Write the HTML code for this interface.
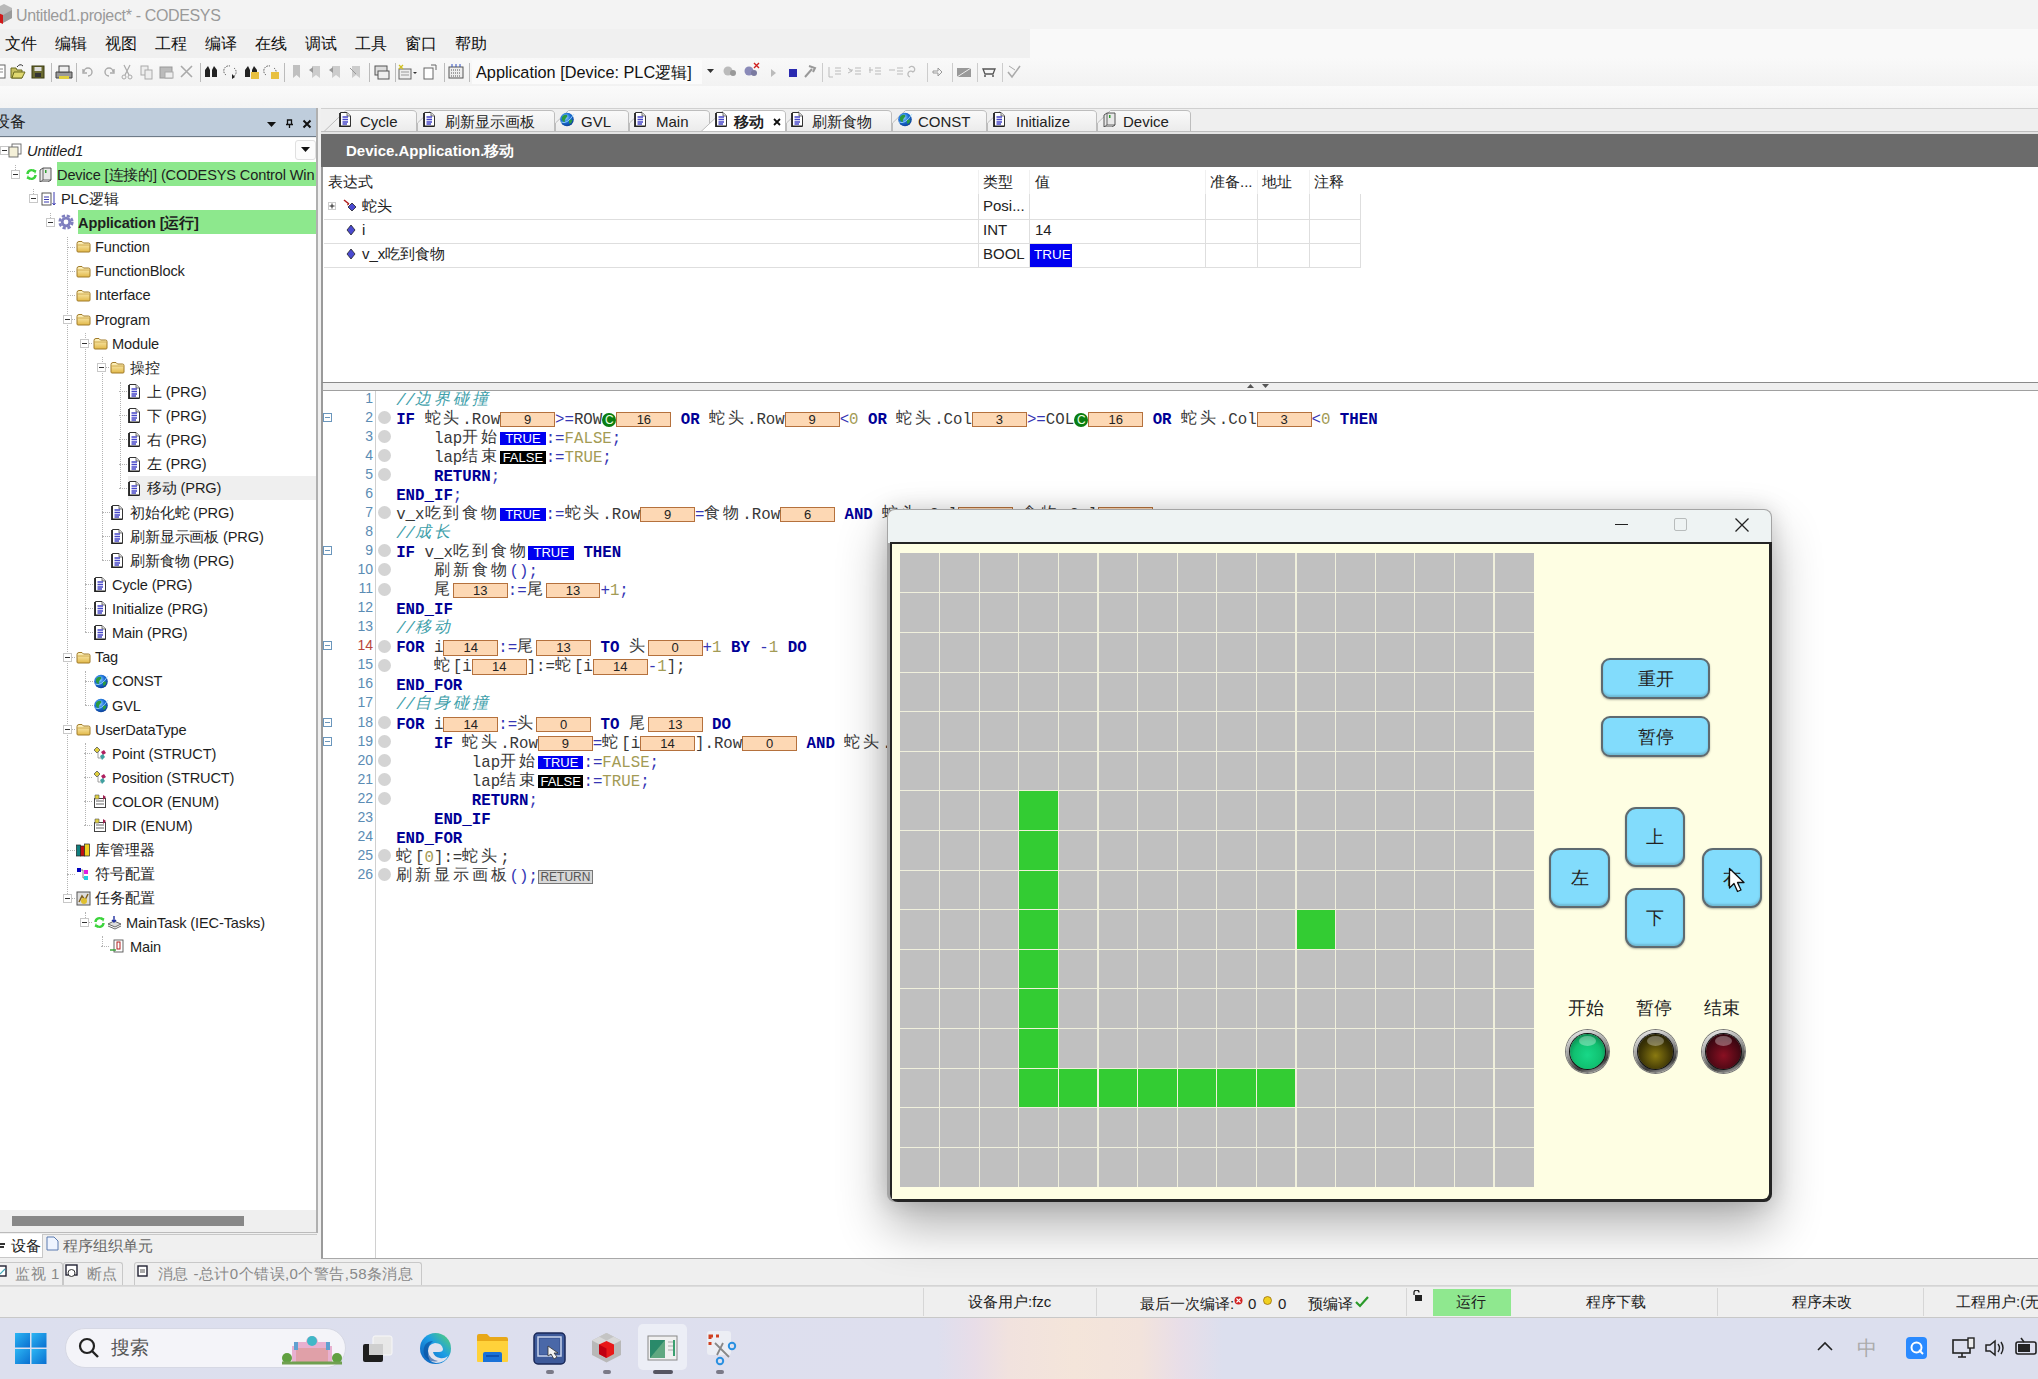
<!DOCTYPE html>
<html><head><meta charset="utf-8">
<style>
*{box-sizing:border-box;margin:0;padding:0}
html,body{width:2038px;height:1379px;overflow:hidden;background:#f0f0f0;font-family:"Liberation Sans",sans-serif;color:#1e1e1e}
.a{position:absolute}
.t{position:absolute;white-space:nowrap}
.btn{position:absolute;background:#82dcfc;border:2px solid #5e6a70;border-radius:11px;box-shadow:inset 0 -2px 2px rgba(0,0,0,0.15),0 1px 2px rgba(0,0,0,0.3);font-size:18px;color:#222;display:flex;align-items:center;justify-content:center}
.lring{width:43px;height:43px;border-radius:50%;background:linear-gradient(160deg,#f4f4f4 0%,#9a9a9a 45%,#3a3a3a 75%,#d8d8d8 100%);box-shadow:0 0 0 1px #777}.lamp{position:absolute;left:4px;top:4px;width:35px;height:35px;border-radius:50%;box-shadow:0 0 0 1px #111}.hl{position:absolute;left:9px;top:2px;width:17px;height:10px;border-radius:50%;background:rgba(255,255,255,0.32)}
.mn{position:absolute;top:34px;font-size:16px;line-height:20px;color:#111}
.tab{position:absolute;top:110px;height:23px;background:linear-gradient(#fafafa,#ececec);border:1px solid #c4c4c4;border-bottom:none;border-radius:4px 4px 0 0}
.tabt{position:absolute;top:112px;font-size:15px;line-height:20px;color:#222;white-space:nowrap}
.th{position:absolute;font-size:15px;line-height:20px;color:#222;white-space:nowrap}
.sb{position:absolute;top:1292px;font-size:15px;line-height:20px;color:#222;white-space:nowrap}

.cl{position:absolute;left:396.15px;height:19px;line-height:19px;white-space:nowrap;font-family:"Liberation Mono",monospace;font-size:15.75px;color:#333}
.cl span{vertical-align:top}
.k,.i,.o,.n,.cm{position:relative;top:1px}
.cj{font-size:16px;letter-spacing:2.9px}
.cl span.cj{top:0px}
.k{font-weight:bold;color:#000096}
.i{color:#383838}
.o{color:#3636b4}
.n{color:#a39b55}
.cm{color:#3ea0aa;font-style:italic}
.bx{display:inline-block;width:54.9px;height:15.2px;margin-top:2px;background:#fdd8b4;border:1px solid #b5713d;font-family:"Liberation Sans",sans-serif;font-size:13px;line-height:14px;text-align:center;color:#222}
.tb,.fb{display:inline-block;width:45.5px;height:13.3px;margin-top:3px;font-family:"Liberation Sans",sans-serif;font-size:13px;line-height:13.5px;text-align:center;color:#fff;background:#0000f0}
.fb{background:#000}
.ci{display:inline-block;width:14.15px;height:14.5px;margin-top:2.5px;border-radius:50%;background:#0a7d10;color:#e8ffe0;font-family:"Liberation Sans",sans-serif;font-size:12px;line-height:14.5px;text-align:center}
.rb{display:inline-block;width:55px;height:14px;margin-top:3px;background:#d8d8d8;border:1px solid #777;font-family:"Liberation Sans",sans-serif;font-size:12px;line-height:12px;text-align:center;color:#555}
.ln{position:absolute;left:340px;width:33px;text-align:right;height:19px;line-height:19px;font-size:14px;color:#5b8cb4}
.bp{position:absolute;left:378px;width:13px;height:13px;border-radius:50%;background:#d4d4d4}
.fd{position:absolute;left:323px;width:9px;height:9px;border:1px solid #6a96bc}
.fd::after{content:"";position:absolute;left:1px;top:3px;width:5px;height:1px;background:#6a96bc}

.tr{font-size:14.6px;letter-spacing:-0.15px;line-height:20px;color:#1e1e1e}
.exp{width:9px;height:9px;background:#fff;border:1px solid #c8c8c8}
.exp::after{content:"";position:absolute;left:1px;top:3px;width:5px;height:1px;background:#333}
.ifo{width:14px;height:11px;background:linear-gradient(#fff4c0,#e8c858);border:1px solid #a48030;border-radius:2px 5px 1px 1px}
.idoc{width:12px;height:15px;background:#fff;border:1px solid #333;border-radius:0 4px 0 0}
.idoc i{position:absolute;left:2px;top:3px;width:6px;height:8px;border-top:2px solid #4040c0;border-bottom:2px solid #4040c0;box-shadow:inset 0 -3px 0 -1px #4040c0}
.iglb{width:14px;height:14px;border-radius:50%;background:radial-gradient(circle at 40% 35%,#8ae0ff,#1a80d0 55%,#1a5020 100%)}

</style></head><body>
<svg width="0" height="0" style="position:absolute"><defs>
<symbol id="doc" viewBox="0 0 12 15"><path d="M1.5 0.5H8L11.5 4V14.5H1.5Z" fill="#fff" stroke="#333"/><path d="M8 0.5V4H11.5" fill="#ddd" stroke="#555" stroke-width="0.8"/><path d="M0.8 1V14.3H11" stroke="#222" stroke-width="1.4" fill="none"/><path d="M3.5 5H9M3.5 7.5H9M3.5 10H9M3.5 12H8" stroke="#4646c8" stroke-width="1.3"/></symbol>
<symbol id="glb" viewBox="0 0 16 16"><defs><radialGradient id="gg" cx="0.4" cy="0.35" r="0.7"><stop offset="0" stop-color="#9ad8ff"/><stop offset="0.5" stop-color="#1a70d8"/><stop offset="1" stop-color="#0a3a90"/></radialGradient></defs><circle cx="8" cy="8.5" r="6.8" fill="url(#gg)"/><path d="M3 6Q5 3 8 4Q9 6 7 7Q5 9 6 11Q4 11 3 9Z M10 9Q12 8 13.5 9Q13 12 10.5 13Q9.5 11 10 9Z" fill="#2a9a40"/><path d="M2 11Q8 14 15 3" stroke="#a8e0ff" stroke-width="1" fill="none" opacity="0.8"/></symbol>
<symbol id="fld" viewBox="0 0 15 13"><defs><linearGradient id="fg" x1="0" y1="0" x2="0" y2="1"><stop offset="0" stop-color="#fff6c8"/><stop offset="1" stop-color="#e2b848"/></linearGradient></defs><path d="M1 3.5Q1 1.5 3 1.5H6L7.5 3H12.5Q14 3 14 4.5V11Q14 12 13 12H2Q1 12 1 11Z" fill="url(#fg)" stroke="#a07a28"/><path d="M1.5 5H13.5" stroke="#c8a040" stroke-width="0.8"/></symbol>
</defs></svg>

<!-- title bar -->
<div class="a" style="left:0;top:0;width:2038px;height:29px;background:#f3f3f3"></div>
<svg class="a" style="left:0;top:3px" width="14" height="22"><path d="M-6 6L4 1L12 5V15L2 20L-6 16Z" fill="#b8b8b8"/><path d="M-6 8L3 12V21L-6 17Z" fill="#d01818"/><path d="M3 12L12 7V15L3 20Z" fill="#9a9a9a"/></svg>
<div class="t" style="left:16px;top:5px;font-size:16px;letter-spacing:-0.35px;line-height:22px;color:#9a9a9a">Untitled1.project* - CODESYS</div>
<!-- menu bar -->
<div class="a" style="left:0;top:29px;width:2038px;height:29px;background:#f0f0f0"></div><div class="a" style="left:1030px;top:29px;width:1008px;height:29px;background:#f9f9f9"></div>
<div class="mn" style="left:5px">文件</div><div class="mn" style="left:55px">编辑</div><div class="mn" style="left:105px">视图</div><div class="mn" style="left:155px">工程</div><div class="mn" style="left:205px">编译</div><div class="mn" style="left:255px">在线</div><div class="mn" style="left:305px">调试</div><div class="mn" style="left:355px">工具</div><div class="mn" style="left:405px">窗口</div><div class="mn" style="left:455px">帮助</div>
<!-- toolbar -->
<div class="a" style="left:0;top:58px;width:2038px;height:28px;background:linear-gradient(#f9f9f9,#f2f2f2)"></div>
<div class="a" style="left:0;top:86px;width:2038px;height:22px;background:linear-gradient(#fafafa,#f4f4f4)"></div>
<svg class="a" style="left:0;top:60px" width="1030" height="24">
<g stroke-width="1">
<rect x="-4" y="5" width="9" height="13" fill="#fff" stroke="#666"/><path d="M-2 9H3M-2 12H3" stroke="#888"/>
<path d="M11 8H16L17 10H22V18H11Z" fill="#c8c060" stroke="#6a6a20"/><path d="M12 18L14 12H25L22 18Z" fill="#e0d870" stroke="#6a6a20"/><path d="M17 7Q20 3 23 6" stroke="#333" fill="none"/>
<rect x="32" y="6" width="12" height="12" fill="#6a6a30" stroke="#3a3a10"/><rect x="34.5" y="7" width="7" height="4" fill="#ddd"/><rect x="35" y="13" width="6" height="4" fill="#333"/>
<path d="M51.5 3V22" stroke="#bbb"/>
<path d="M56 12H72V18H56Z" fill="#999" stroke="#444"/><rect x="59" y="6" width="10" height="6" fill="#eee" stroke="#444"/><rect x="59" y="16" width="10" height="3" fill="#e0d040"/>
<path d="M76.5 3V22" stroke="#bbb"/>
<path d="M84 12A4 4 0 1 1 88 16M83 9V13H87" stroke="#aaa" fill="none" stroke-width="1.4"/>
<path d="M113 12A4 4 0 1 0 109 16M114 9V13H110" stroke="#aaa" fill="none" stroke-width="1.4"/>
<path d="M124 5L129 15M130 5L125 15" stroke="#aaa" stroke-width="1.2"/><circle cx="124" cy="17" r="2" fill="none" stroke="#aaa"/><circle cx="130" cy="17" r="2" fill="none" stroke="#aaa"/>
<rect x="141" y="6" width="7" height="9" fill="#eee" stroke="#aaa"/><rect x="145" y="10" width="7" height="9" fill="#eee" stroke="#aaa"/>
<rect x="160" y="7" width="12" height="11" fill="#bbb" stroke="#999"/><rect x="165" y="12" width="8" height="6" fill="#eee" stroke="#aaa"/>
<path d="M181 6L192 17M192 6L181 17" stroke="#aaa" stroke-width="1.6"/>
<path d="M200.5 3V22" stroke="#bbb"/>
<path d="M205 17V10L208 6L210 10V17ZM212 17V10L214 6L217 10V17Z" fill="#222"/>
<path d="M226 15A5 5 0 0 1 230 6M234 8A5 5 0 0 1 232 17" stroke="#555" fill="none" stroke-dasharray="1.5 1"/><path d="M232 14L235 17L232 19Z" fill="#222"/>
<path d="M245 17V10L248 6L250 10V17ZM252 17V10L254 6L257 10V17Z" fill="#222"/><rect x="251" y="12" width="8" height="7" fill="#e8c040"/>
<path d="M266 15A5 5 0 0 1 270 6M274 8A5 5 0 0 1 272 17" stroke="#555" fill="none" stroke-dasharray="1.5 1"/><rect x="271" y="12" width="8" height="7" fill="#e8c040"/>
<path d="M284.5 3V22" stroke="#bbb"/>
<path d="M293 5H300V18L296.5 15L293 18Z" fill="#c0c0c0"/>
<path d="M312 6H320V18L316 15L312 18Z" fill="#ccc"/><path d="M309 10L313 7V13Z" fill="#999"/>
<path d="M332 6H340V18L336 15L332 18Z" fill="#ccc"/><path d="M329 10L333 7V13Z" fill="#999"/>
<path d="M352 6H360V18L356 15L352 18Z" fill="#ccc"/><path d="M350 8L356 14" stroke="#999"/>
<path d="M369.5 3V22" stroke="#bbb"/>
<rect x="375" y="6" width="12" height="9" fill="#ddd" stroke="#555"/><rect x="378" y="11" width="11" height="8" fill="#eee" stroke="#555"/>
<path d="M395.5 3V22" stroke="#bbb"/>
<rect x="399" y="9" width="12" height="10" fill="#eee" stroke="#666"/><path d="M401 12H409M401 15H409" stroke="#999"/><path d="M399 5L403 9M403 5L399 9" stroke="#d0c020" stroke-width="1.3"/><path d="M413 12H417L415 14Z" fill="#333"/>
<rect x="424" y="8" width="9" height="11" fill="#fff" stroke="#666"/><path d="M431 5H436V10" stroke="#666" fill="none"/>
<path d="M444.5 3V22" stroke="#bbb"/>
<rect x="449" y="7" width="14" height="11" fill="#eee" stroke="#555"/><path d="M451 10H461M451 13H461M451 16H461" stroke="#555" stroke-dasharray="1 1"/><path d="M452 4V7M456 4V7M460 4V7" stroke="#3050c0"/>
<path d="M469.5 3V22" stroke="#bbb"/>
<circle cx="728" cy="11" r="4.5" fill="#bbb"/><circle cx="733" cy="13" r="3" fill="#999"/>
<circle cx="749" cy="11" r="4.5" fill="#8a8ab8"/><circle cx="754" cy="13" r="3" fill="#7a7aa0"/><path d="M754 3L759 8M759 3L754 8" stroke="#d02020" stroke-width="1.4"/>
<path d="M771 9L776 13L771 17Z" fill="#bbb"/>
<rect x="789" y="9" width="8" height="8" fill="#2a2ab0"/>
<path d="M805 17L812 9M809 6L815 8L813 12" stroke="#999" stroke-width="2" fill="none"/>
<path d="M822.5 3V22" stroke="#ccc"/>
<path d="M829 7V17H833M835 8H841M835 11H841M835 14H841" stroke="#bbb" fill="none"/>
<path d="M849 10H853M855 8H861M855 11H861M855 14H861" stroke="#bbb" fill="none"/><path d="M848 8L852 11L848 13" stroke="#bbb" fill="none"/>
<path d="M869 10H873M875 8H881M875 11H881M875 14H881" stroke="#bbb" fill="none"/><path d="M870 7V13" stroke="#bbb"/>
<path d="M889 10H895M897 8H903M897 11H903M897 14H903" stroke="#bbb" fill="none"/>
<path d="M909 8A3 3 0 1 1 913 12A3 3 0 1 0 910 17" stroke="#bbb" fill="none" stroke-width="1.3"/>
<path d="M927.5 3V22" stroke="#ccc"/>
<path d="M933 11H938V8L942 12L938 16V13H933Z" fill="none" stroke="#999"/>
<path d="M952.5 3V22" stroke="#ccc"/>
<rect x="957" y="8" width="14" height="9" fill="#999"/><path d="M957 17L971 8" stroke="#eee"/>
<path d="M977.5 3V22" stroke="#ccc"/>
<path d="M983 9H995L993 14H985Z M984 16H986M992 16H994" stroke="#555" fill="none" stroke-width="1.3"/>
<path d="M1002.5 3V22" stroke="#ccc"/>
<path d="M1008 12L1012 17L1020 6" stroke="#aaa" fill="none" stroke-width="1.6"/><path d="M1009 6L1015 10" stroke="#aaa"/>
</g></svg>

<div class="a" style="left:472px;top:60px;width:230px;height:24px;background:#fbfbfb"></div>
<div class="t" style="left:476px;top:61px;font-size:16.3px;line-height:22px;color:#111">Application [Device: PLC逻辑]</div>
<svg class="a" style="left:707px;top:69px" width="7" height="5"><path d="M0 0H7L3.5 4Z" fill="#333"/></svg>

<!-- left panel -->
<div class="a" style="left:0;top:108px;width:317px;height:29px;background:#bfcddc;border-bottom:1px solid #6d7a88"></div>
<div class="t" style="left:-6px;top:112px;font-size:16px;line-height:20px">设备</div>
<svg class="a" style="left:267px;top:122px" width="9" height="5"><path d="M0 0H9L4.5 5Z" fill="#111"/></svg>
<svg class="a" style="left:285px;top:119px" width="9" height="10"><path d="M2.5 1H6.5V5.5H2.5Z M1 5.5H8 M4.5 5.5V9" stroke="#111" stroke-width="1.3" fill="none"/></svg>
<svg class="a" style="left:302px;top:119px" width="10" height="10"><path d="M1.5 1.5L8.5 8.5M8.5 1.5L1.5 8.5" stroke="#111" stroke-width="2"/></svg>
<div class="a" style="left:0;top:138px;width:317px;height:1072px;background:#fff"></div>
<div class="a" style="left:295px;top:140px;width:21px;height:20px;background:#fcfcfc;border:1px solid #e0e0e0;border-radius:3px"></div>
<svg class="a" style="left:301px;top:147px" width="9" height="5"><path d="M0 0H9L4.5 5Z" fill="#111"/></svg>
<div class="a" style="left:0;top:138px;width:316px;height:1072px;overflow:hidden"><div class="a" style="left:0;top:-138px;width:316px;height:1210px"><div class="a" style="left:67px;top:236.8px;width:1px;height:660.9px;border-left:1px dotted #b4b4b4"></div>
<div class="a" style="left:85px;top:333.3px;width:1px;height:299.1px;border-left:1px dotted #b4b4b4"></div>
<div class="a" style="left:102px;top:357.4px;width:1px;height:202.6px;border-left:1px dotted #b4b4b4"></div>
<div class="a" style="left:120px;top:381.6px;width:1px;height:106.1px;border-left:1px dotted #b4b4b4"></div>
<div class="a" style="left:85px;top:671.0px;width:1px;height:33.8px;border-left:1px dotted #b4b4b4"></div>
<div class="a" style="left:85px;top:743.4px;width:1px;height:82.0px;border-left:1px dotted #b4b4b4"></div>
<div class="a" style="left:85px;top:912.2px;width:1px;height:9.6px;border-left:1px dotted #b4b4b4"></div>
<div class="a" style="left:102px;top:936.3px;width:1px;height:9.6px;border-left:1px dotted #b4b4b4"></div>
<div class="a" style="left:15px;top:164.5px;width:1px;height:9.6px;border-left:1px dotted #b4b4b4"></div>
<div class="a" style="left:33px;top:188.6px;width:1px;height:9.6px;border-left:1px dotted #b4b4b4"></div>
<div class="a" style="left:50px;top:212.7px;width:1px;height:9.6px;border-left:1px dotted #b4b4b4"></div>
<div class="a exp" style="left:0px;top:146.0px"></div>
<svg class="a" style="left:8px;top:143.0px" width="15" height="15"><rect x="4" y="1" width="9" height="10" fill="#fff" stroke="#666" stroke-width="0.9"/><rect x="1" y="4" width="9" height="10" fill="#f4f0d8" stroke="#666" stroke-width="0.9"/></svg>
<div class="t tr" style="left:27px;top:140.7px;font-style:italic;">Untitled1</div>
<div class="a" style="left:57px;top:162.1px;width:260px;height:24px;background:#8de88d"></div>
<div class="a exp" style="left:11px;top:170.1px"></div>
<svg class="a" style="left:25px;top:168.12px" width="13" height="13"><path d="M2.5 6A4 4 0 0 1 9.5 3.5" fill="none" stroke="#3cd43c" stroke-width="2.4"/><path d="M10.5 7A4 4 0 0 1 3.5 9.5" fill="none" stroke="#3cd43c" stroke-width="2.4"/><path d="M8 1L11.5 2.5L10 6Z M5 12L1.5 10.5L3 7Z" fill="#3cd43c"/></svg>
<svg class="a" style="left:39px;top:167.12px" width="13" height="15"><path d="M1 3L4 1H12V13L9 15H1Z" fill="#e8e8e8" stroke="#444" stroke-width="0.9"/><path d="M4 1V13L1 15M4 13H12" stroke="#444" fill="none" stroke-width="0.8"/><rect x="6" y="3" width="1.5" height="3" fill="#30a030"/></svg>
<div class="t tr" style="left:57px;top:164.8px;">Device [连接的] (CODESYS Control Win V3 x64)</div>
<div class="a exp" style="left:29px;top:194.2px"></div>
<svg class="a" style="left:41px;top:191.24px" width="16" height="15"><rect x="1" y="2" width="9" height="12" fill="#fff" stroke="#444" stroke-width="0.9"/><path d="M3 6H8M3 8.5H8M3 11H8" stroke="#3a3ab0" stroke-width="1.2"/><path d="M13 1V14M11.5 12L13 14L14.5 12" stroke="#3a3ab0" fill="none"/></svg>
<div class="t tr" style="left:61px;top:188.9px;">PLC逻辑</div>
<div class="a" style="left:78px;top:210.4px;width:239px;height:24px;background:#8de88d"></div>
<div class="a exp" style="left:46px;top:218.4px"></div>
<svg class="a" style="left:58px;top:214.36px" width="16" height="16"><circle cx="8" cy="8" r="6.3" fill="none" stroke="#7f7fbf" stroke-width="2.6" stroke-dasharray="3.2 1.75"/><circle cx="8" cy="8" r="5.2" fill="#7f7fbf"/><circle cx="8" cy="8" r="2.4" fill="#fff"/></svg>
<div class="t tr" style="left:78px;top:213.1px;font-weight:bold;">Application [运行]</div>
<div class="a" style="left:67px;top:246.5px;width:8px;height:1px;border-top:1px dotted #b4b4b4"></div>
<svg class="a" style="left:76px;top:240.48000000000002px" width="15" height="13"><use href="#fld"/></svg>
<div class="t tr" style="left:95px;top:237.2px;">Function</div>
<div class="a" style="left:67px;top:270.6px;width:8px;height:1px;border-top:1px dotted #b4b4b4"></div>
<svg class="a" style="left:76px;top:264.6px" width="15" height="13"><use href="#fld"/></svg>
<div class="t tr" style="left:95px;top:261.3px;">FunctionBlock</div>
<div class="a" style="left:67px;top:294.7px;width:8px;height:1px;border-top:1px dotted #b4b4b4"></div>
<svg class="a" style="left:76px;top:288.72px" width="15" height="13"><use href="#fld"/></svg>
<div class="t tr" style="left:95px;top:285.4px;">Interface</div>
<div class="a" style="left:71px;top:318.8px;width:4px;height:1px;border-top:1px dotted #b4b4b4"></div>
<div class="a exp" style="left:63px;top:314.8px"></div>
<svg class="a" style="left:76px;top:312.84000000000003px" width="15" height="13"><use href="#fld"/></svg>
<div class="t tr" style="left:95px;top:309.5px;">Program</div>
<div class="a" style="left:88px;top:343.0px;width:4px;height:1px;border-top:1px dotted #b4b4b4"></div>
<div class="a exp" style="left:80px;top:339.0px"></div>
<svg class="a" style="left:93px;top:336.96000000000004px" width="15" height="13"><use href="#fld"/></svg>
<div class="t tr" style="left:112px;top:333.7px;">Module</div>
<div class="a" style="left:105px;top:367.1px;width:4px;height:1px;border-top:1px dotted #b4b4b4"></div>
<div class="a exp" style="left:97px;top:363.1px"></div>
<svg class="a" style="left:110px;top:361.08000000000004px" width="15" height="13"><use href="#fld"/></svg>
<div class="t tr" style="left:130px;top:357.8px;">操控</div>
<div class="a" style="left:119px;top:391.2px;width:8px;height:1px;border-top:1px dotted #b4b4b4"></div>
<svg class="a" style="left:128px;top:384.20000000000005px" width="12" height="15"><use href="#doc"/></svg>
<div class="t tr" style="left:147px;top:381.9px;">上 (PRG)</div>
<div class="a" style="left:119px;top:415.3px;width:8px;height:1px;border-top:1px dotted #b4b4b4"></div>
<svg class="a" style="left:128px;top:408.32px" width="12" height="15"><use href="#doc"/></svg>
<div class="t tr" style="left:147px;top:406.0px;">下 (PRG)</div>
<div class="a" style="left:119px;top:439.4px;width:8px;height:1px;border-top:1px dotted #b4b4b4"></div>
<svg class="a" style="left:128px;top:432.44px" width="12" height="15"><use href="#doc"/></svg>
<div class="t tr" style="left:147px;top:430.1px;">右 (PRG)</div>
<div class="a" style="left:119px;top:463.6px;width:8px;height:1px;border-top:1px dotted #b4b4b4"></div>
<svg class="a" style="left:128px;top:456.56px" width="12" height="15"><use href="#doc"/></svg>
<div class="t tr" style="left:147px;top:454.3px;">左 (PRG)</div>
<div class="a" style="left:128px;top:475.7px;width:189px;height:24px;background:#efefef"></div>
<div class="a" style="left:119px;top:487.7px;width:8px;height:1px;border-top:1px dotted #b4b4b4"></div>
<svg class="a" style="left:128px;top:480.68px" width="12" height="15"><use href="#doc"/></svg>
<div class="t tr" style="left:147px;top:478.4px;">移动 (PRG)</div>
<div class="a" style="left:102px;top:511.8px;width:8px;height:1px;border-top:1px dotted #b4b4b4"></div>
<svg class="a" style="left:111px;top:504.8px" width="12" height="15"><use href="#doc"/></svg>
<div class="t tr" style="left:130px;top:502.5px;">初始化蛇 (PRG)</div>
<div class="a" style="left:102px;top:535.9px;width:8px;height:1px;border-top:1px dotted #b4b4b4"></div>
<svg class="a" style="left:111px;top:528.9200000000001px" width="12" height="15"><use href="#doc"/></svg>
<div class="t tr" style="left:130px;top:526.6px;">刷新显示画板 (PRG)</div>
<div class="a" style="left:102px;top:560.0px;width:8px;height:1px;border-top:1px dotted #b4b4b4"></div>
<svg class="a" style="left:111px;top:553.04px" width="12" height="15"><use href="#doc"/></svg>
<div class="t tr" style="left:130px;top:550.7px;">刷新食物 (PRG)</div>
<div class="a" style="left:85px;top:584.2px;width:8px;height:1px;border-top:1px dotted #b4b4b4"></div>
<svg class="a" style="left:94px;top:577.1600000000001px" width="12" height="15"><use href="#doc"/></svg>
<div class="t tr" style="left:112px;top:574.9px;">Cycle (PRG)</div>
<div class="a" style="left:85px;top:608.3px;width:8px;height:1px;border-top:1px dotted #b4b4b4"></div>
<svg class="a" style="left:94px;top:601.28px" width="12" height="15"><use href="#doc"/></svg>
<div class="t tr" style="left:112px;top:599.0px;">Initialize (PRG)</div>
<div class="a" style="left:85px;top:632.4px;width:8px;height:1px;border-top:1px dotted #b4b4b4"></div>
<svg class="a" style="left:94px;top:625.4000000000001px" width="12" height="15"><use href="#doc"/></svg>
<div class="t tr" style="left:112px;top:623.1px;">Main (PRG)</div>
<div class="a" style="left:71px;top:656.5px;width:4px;height:1px;border-top:1px dotted #b4b4b4"></div>
<div class="a exp" style="left:63px;top:652.5px"></div>
<svg class="a" style="left:76px;top:650.52px" width="15" height="13"><use href="#fld"/></svg>
<div class="t tr" style="left:95px;top:647.2px;">Tag</div>
<div class="a" style="left:85px;top:680.6px;width:8px;height:1px;border-top:1px dotted #b4b4b4"></div>
<svg class="a" style="left:93px;top:672.64px" width="16" height="16"><use href="#glb"/></svg>
<div class="t tr" style="left:112px;top:671.3px;">CONST</div>
<div class="a" style="left:85px;top:704.8px;width:8px;height:1px;border-top:1px dotted #b4b4b4"></div>
<svg class="a" style="left:93px;top:696.76px" width="16" height="16"><use href="#glb"/></svg>
<div class="t tr" style="left:112px;top:695.5px;">GVL</div>
<div class="a" style="left:71px;top:728.9px;width:4px;height:1px;border-top:1px dotted #b4b4b4"></div>
<div class="a exp" style="left:63px;top:724.9px"></div>
<svg class="a" style="left:76px;top:722.88px" width="15" height="13"><use href="#fld"/></svg>
<div class="t tr" style="left:95px;top:719.6px;">UserDataType</div>
<div class="a" style="left:84px;top:753.0px;width:8px;height:1px;border-top:1px dotted #b4b4b4"></div>
<svg class="a" style="left:93px;top:746.0px" width="15" height="15"><path d="M1 4L4 1L7 4L4 7Z" fill="#e0d040" stroke="#555" stroke-width="0.8"/><path d="M8 6L11 4L13 7L10 9Z" fill="#b02060"/><path d="M7 10L10 8L12 11L9 14Z" fill="#40a0a0"/><path d="M5 6V12H8" stroke="#888" fill="none" stroke-width="0.8"/></svg>
<div class="t tr" style="left:112px;top:743.7px;">Point (STRUCT)</div>
<div class="a" style="left:84px;top:777.1px;width:8px;height:1px;border-top:1px dotted #b4b4b4"></div>
<svg class="a" style="left:93px;top:770.12px" width="15" height="15"><path d="M1 4L4 1L7 4L4 7Z" fill="#e0d040" stroke="#555" stroke-width="0.8"/><path d="M8 6L11 4L13 7L10 9Z" fill="#b02060"/><path d="M7 10L10 8L12 11L9 14Z" fill="#40a0a0"/><path d="M5 6V12H8" stroke="#888" fill="none" stroke-width="0.8"/></svg>
<div class="t tr" style="left:112px;top:767.8px;">Position (STRUCT)</div>
<div class="a" style="left:84px;top:801.2px;width:8px;height:1px;border-top:1px dotted #b4b4b4"></div>
<svg class="a" style="left:93px;top:794.24px" width="15" height="15"><rect x="1.5" y="4.5" width="11" height="9" fill="#fff" stroke="#444"/><path d="M3 7H11M3 10H11" stroke="#666"/><path d="M2 1L6 1L6 5L2 5Z" fill="#e0d040" stroke="#555" stroke-width="0.6"/><path d="M10 1L13 3L10 6Z" fill="#a02050"/></svg>
<div class="t tr" style="left:112px;top:791.9px;">COLOR (ENUM)</div>
<div class="a" style="left:84px;top:825.4px;width:8px;height:1px;border-top:1px dotted #b4b4b4"></div>
<svg class="a" style="left:93px;top:818.36px" width="15" height="15"><rect x="1.5" y="4.5" width="11" height="9" fill="#fff" stroke="#444"/><path d="M3 7H11M3 10H11" stroke="#666"/><path d="M2 1L6 1L6 5L2 5Z" fill="#e0d040" stroke="#555" stroke-width="0.6"/><path d="M10 1L13 3L10 6Z" fill="#a02050"/></svg>
<div class="t tr" style="left:112px;top:816.1px;">DIR (ENUM)</div>
<div class="a" style="left:67px;top:849.5px;width:8px;height:1px;border-top:1px dotted #b4b4b4"></div>
<svg class="a" style="left:76px;top:842.48px" width="15" height="15"><rect x="0.5" y="3" width="4" height="11" fill="#108080" stroke="#222" stroke-width="0.7"/><rect x="4.5" y="4" width="4" height="10" fill="#c01010" stroke="#222" stroke-width="0.7"/><rect x="8.5" y="2" width="5" height="12" fill="#f0d020" stroke="#222" stroke-width="0.7"/></svg>
<div class="t tr" style="left:95px;top:840.2px;">库管理器</div>
<div class="a" style="left:67px;top:873.6px;width:8px;height:1px;border-top:1px dotted #b4b4b4"></div>
<svg class="a" style="left:76px;top:866.6px" width="15" height="15"><rect x="1" y="1" width="4" height="4" fill="#0000c0"/><rect x="8" y="3" width="4" height="4" fill="#e020e0"/><rect x="8" y="9" width="4" height="4" fill="#20d0e0"/><path d="M5 3H7V11H8" stroke="#666" fill="none" stroke-width="0.8"/></svg>
<div class="t tr" style="left:95px;top:864.3px;">符号配置</div>
<div class="a" style="left:71px;top:897.7px;width:4px;height:1px;border-top:1px dotted #b4b4b4"></div>
<div class="a exp" style="left:63px;top:893.7px"></div>
<svg class="a" style="left:76px;top:890.72px" width="15" height="15"><rect x="1" y="1" width="13" height="13" fill="#ddd" stroke="#555"/><path d="M3 11L6 5L9 9L12 3" stroke="#806020" fill="none" stroke-width="1.5"/><circle cx="8" cy="10" r="3" fill="#e0c030"/></svg>
<div class="t tr" style="left:95px;top:888.4px;">任务配置</div>
<div class="a" style="left:88px;top:921.8px;width:4px;height:1px;border-top:1px dotted #b4b4b4"></div>
<div class="a exp" style="left:80px;top:917.8px"></div>
<svg class="a" style="left:93px;top:915.84px" width="13" height="13"><path d="M2.5 6A4 4 0 0 1 9.5 3.5" fill="none" stroke="#3cd43c" stroke-width="2.4"/><path d="M10.5 7A4 4 0 0 1 3.5 9.5" fill="none" stroke="#3cd43c" stroke-width="2.4"/><path d="M8 1L11.5 2.5L10 6Z M5 12L1.5 10.5L3 7Z" fill="#3cd43c"/></svg>
<svg class="a" style="left:107px;top:914.84px" width="15" height="15"><path d="M1 9L7 6L14 9L8 12Z" fill="#ddd" stroke="#444" stroke-width="0.8"/><path d="M1 11L8 14L14 11" stroke="#444" fill="none" stroke-width="0.8"/><path d="M7 1V7M5 5L7 7L9 5" stroke="#2030a0" stroke-width="1.4" fill="none"/></svg>
<div class="t tr" style="left:126px;top:912.5px;">MainTask (IEC-Tasks)</div>
<div class="a" style="left:101px;top:946.0px;width:8px;height:1px;border-top:1px dotted #b4b4b4"></div>
<svg class="a" style="left:110px;top:938.96px" width="15" height="15"><rect x="4" y="1" width="9" height="12" fill="#fff" stroke="#555" stroke-width="0.9"/><rect x="7" y="3" width="3" height="7" fill="none" stroke="#b02020" stroke-width="1"/><path d="M0 11H6" stroke="#30a030" stroke-width="1.4"/></svg>
<div class="t tr" style="left:130px;top:936.7px;">Main</div></div></div>
<div class="a" style="left:0;top:1210px;width:317px;height:23px;background:#efefef;border-bottom:1px solid #bbb"></div>
<div class="a" style="left:12px;top:1216px;width:232px;height:10px;background:#888"></div>
<div class="a" style="left:316px;top:108px;width:1.5px;height:1125px;background:#b0b0b0"></div>
<!-- left bottom tabs -->
<div class="a" style="left:0;top:1234px;width:317px;height:1px;background:#c8c8c8"></div>
<div class="a" style="left:0;top:1234px;width:43px;height:24px;background:#fff;border-right:1px solid #c8c8c8;border-bottom:1px solid #c8c8c8"></div>
<div class="t" style="left:11px;top:1236px;font-size:15px;line-height:20px;color:#222">设备</div>
<svg class="a" style="left:0;top:1238px" width="7" height="14"><path d="M0 6H5M0 9H4" stroke="#333" stroke-width="2"/></svg>
<svg class="a" style="left:46px;top:1236px" width="13" height="15"><path d="M1 1H8L12 5V14H1Z" fill="#eef4ff" stroke="#5a7ab0"/></svg>
<div class="t" style="left:63px;top:1236px;font-size:15px;line-height:20px;color:#666">程序组织单元</div>

<!-- editor -->
<div class="a" style="left:321px;top:108px;width:1717px;height:26px;background:#efefef;border-top:1px solid #d0d0d0"></div>
<svg class="a" style="left:0;top:0" width="1200" height="136"><defs><linearGradient id="tg" x1="0" y1="0" x2="0" y2="1"><stop offset="0" stop-color="#fafafa"/><stop offset="1" stop-color="#ebebeb"/></linearGradient></defs><path d="M324 131.5L346 110.5H412Q416.5 110.5 416.5 114V131.5" fill="url(#tg)" stroke="#bdbdbd"/><path d="M417.5 131.5V123L430.5 110.5H550Q554.5 110.5 554.5 114V131.5" fill="url(#tg)" stroke="#bdbdbd"/><path d="M555.5 131.5V123L568.5 110.5H624Q628.5 110.5 628.5 114V131.5" fill="url(#tg)" stroke="#bdbdbd"/><path d="M629.5 131.5V123L642.5 110.5H705Q709.5 110.5 709.5 114V131.5" fill="url(#tg)" stroke="#bdbdbd"/><path d="M786.5 131.5V123L799.5 110.5H887Q891.5 110.5 891.5 114V131.5" fill="url(#tg)" stroke="#bdbdbd"/><path d="M892.5 131.5V123L905.5 110.5H982Q986.5 110.5 986.5 114V131.5" fill="url(#tg)" stroke="#bdbdbd"/><path d="M987.5 131.5V123L1000.5 110.5H1092Q1096.5 110.5 1096.5 114V131.5" fill="url(#tg)" stroke="#bdbdbd"/><path d="M1097.5 131.5V123L1110.5 110.5H1186Q1190.5 110.5 1190.5 114V131.5" fill="url(#tg)" stroke="#bdbdbd"/><path d="M700 132.5L723.5 110.5H781Q785.5 110.5 785.5 114V132.5" fill="#fff" stroke="#bdbdbd"/></svg>
<div class="tabt" style="left:360px">Cycle</div>
<div class="tabt" style="left:445px">刷新显示画板</div>
<div class="tabt" style="left:581px">GVL</div>
<div class="tabt" style="left:656px">Main</div>
<div class="tabt" style="left:734px;font-weight:bold">移动</div>
<svg class="a" style="left:773px;top:118px" width="8" height="8"><path d="M1 1L7 7M7 1L1 7" stroke="#111" stroke-width="1.8"/></svg>
<div class="tabt" style="left:812px">刷新食物</div>
<div class="tabt" style="left:918px">CONST</div>
<div class="tabt" style="left:1016px">Initialize</div>
<div class="tabt" style="left:1123px">Device</div>
<svg class="a" style="left:339px;top:112px" width="12" height="15"><use href="#doc"/></svg>
<svg class="a" style="left:423px;top:112px" width="12" height="15"><use href="#doc"/></svg>
<svg class="a" style="left:559px;top:111px" width="16" height="16"><use href="#glb"/></svg>
<svg class="a" style="left:634px;top:112px" width="12" height="15"><use href="#doc"/></svg>
<svg class="a" style="left:715px;top:112px" width="12" height="15"><use href="#doc"/></svg>
<svg class="a" style="left:791px;top:112px" width="12" height="15"><use href="#doc"/></svg>
<svg class="a" style="left:897px;top:111px" width="16" height="16"><use href="#glb"/></svg>
<svg class="a" style="left:993px;top:112px" width="12" height="15"><use href="#doc"/></svg>
<svg class="a" style="left:1103px;top:112px" width="13" height="15"><path d="M1 3L4 1H12V13L9 15H1Z" fill="#e8e8e8" stroke="#444" stroke-width="0.9"/><path d="M4 1V13L1 15M4 13H12" stroke="#444" fill="none" stroke-width="0.8"/><rect x="6" y="3" width="1.5" height="3" fill="#30a030"/></svg>

<div class="a" style="left:321px;top:131px;width:1717px;height:3px;background:#e4e4e4;border-top:1px solid #bdbdbd"></div>
<div class="a" style="left:321px;top:134px;width:1717px;height:33px;background:#6b6b6b"></div>
<div class="t" style="left:346px;top:141px;font-size:15px;line-height:20px;font-weight:bold;color:#fff">Device.Application.移动</div>
<div class="a" style="left:321px;top:167px;width:1717px;height:216px;background:#fff;border-left:2px solid #9a9a9a;border-bottom:1px solid #8a8a8a"></div>
<div class="th" style="left:328px;top:172px">表达式</div>
<div class="th" style="left:983px;top:172px">类型</div>
<div class="th" style="left:1035px;top:172px">值</div>
<div class="th" style="left:1210px;top:172px">准备...</div>
<div class="th" style="left:1262px;top:172px">地址</div>
<div class="th" style="left:1314px;top:172px">注释</div>
<div class="a" style="left:978px;top:170px;width:1px;height:24px;background:#f0f0f0"></div>
<div class="a" style="left:1029px;top:170px;width:1px;height:24px;background:#f0f0f0"></div>
<div class="a" style="left:1205px;top:170px;width:1px;height:24px;background:#f0f0f0"></div>
<div class="a" style="left:1257px;top:170px;width:1px;height:24px;background:#f0f0f0"></div>
<div class="a" style="left:1309px;top:170px;width:1px;height:24px;background:#f0f0f0"></div>
<div class="a" style="left:978px;top:194px;width:1px;height:74px;background:#dedede"></div>
<div class="a" style="left:1029px;top:194px;width:1px;height:74px;background:#dedede"></div>
<div class="a" style="left:1205px;top:194px;width:1px;height:74px;background:#dedede"></div>
<div class="a" style="left:1257px;top:194px;width:1px;height:74px;background:#dedede"></div>
<div class="a" style="left:1309px;top:194px;width:1px;height:74px;background:#dedede"></div>
<div class="a" style="left:1360px;top:194px;width:1px;height:74px;background:#dedede"></div>
<div class="a" style="left:324px;top:219px;width:1037px;height:1px;background:#dedede"></div>
<div class="a" style="left:324px;top:243px;width:1037px;height:1px;background:#dedede"></div>
<div class="a" style="left:324px;top:267px;width:1037px;height:1px;background:#dedede"></div>
<div class="a" style="left:328px;top:202px;width:8px;height:8px;border:1px solid #ccc;background:#fff"></div>
<svg class="a" style="left:328px;top:202px" width="8" height="8"><path d="M1.5 4H6.5M4 1.5V6.5" stroke="#222" stroke-width="1"/></svg>
<svg class="a" style="left:343px;top:199px" width="14" height="14"><path d="M1 1L6 5" stroke="#b02020" stroke-width="1.6"/><path d="M4 3L6 5L4 6" stroke="#b02020" fill="none"/><path d="M9 4L13 8L9 12L5 8Z" fill="#4a4ad0" stroke="#222" stroke-width="0.8"/></svg>
<div class="th" style="left:362px;top:196px">蛇头</div>
<svg class="a" style="left:345px;top:224px" width="12" height="12"><path d="M6 1L10 6L6 11L2 6Z" fill="#4a4ad0" stroke="#222" stroke-width="0.8"/></svg>
<div class="th" style="left:362px;top:220px">i</div>
<svg class="a" style="left:345px;top:248px" width="12" height="12"><path d="M6 1L10 6L6 11L2 6Z" fill="#4a4ad0" stroke="#222" stroke-width="0.8"/></svg>
<div class="th" style="left:362px;top:244px">v_x吃到食物</div>
<div class="th" style="left:983px;top:196px">Posi...</div>
<div class="th" style="left:983px;top:220px">INT</div>
<div class="th" style="left:1035px;top:220px">14</div>
<div class="th" style="left:983px;top:244px">BOOL</div>
<div class="a" style="left:1030px;top:244px;width:42px;height:23px;background:#0000f0"></div>
<div class="th" style="left:1034px;top:245px;color:#fff;font-size:13.5px">TRUE</div>

<div class="a" style="left:321px;top:383px;width:1717px;height:8px;background:#efefef;border-left:2px solid #9a9a9a;border-bottom:1px solid #a0a0a0"></div>
<svg class="a" style="left:1245px;top:383px" width="26" height="6"><path d="M2 5L5.5 1L9 5Z M17 1H24L20.5 5Z" fill="#555"/></svg>
<div class="a" style="left:321px;top:391px;width:1717px;height:868px;background:#fff;border-left:2px solid #9a9a9a"></div>
<div class="a" style="left:375px;top:391px;width:1px;height:868px;background:#d0d0d0"></div>
<div class="ln" style="top:389.00px;">1</div>
<div class="cl" style="top:391.00px"><span class="cm">//</span><span class="cm cj">边界碰撞</span></div>
<div class="ln" style="top:408.03px;">2</div>
<div class="bp" style="top:411.23px"></div>
<div class="fd" style="top:413.03px"></div>
<div class="cl" style="top:410.03px"><span class="k">IF</span><span class="i">&nbsp;</span><span class="i cj">蛇头</span><span class="i">.Row</span><span class="bx">9</span><span class="o">&gt;=</span><span class="i">ROW</span><span class="ci">C</span><span class="bx">16</span><span class="i">&nbsp;</span><span class="k">OR</span><span class="i">&nbsp;</span><span class="i cj">蛇头</span><span class="i">.Row</span><span class="bx">9</span><span class="o">&lt;</span><span class="n">0</span><span class="i">&nbsp;</span><span class="k">OR</span><span class="i">&nbsp;</span><span class="i cj">蛇头</span><span class="i">.Col</span><span class="bx">3</span><span class="o">&gt;=</span><span class="i">COL</span><span class="ci">C</span><span class="bx">16</span><span class="i">&nbsp;</span><span class="k">OR</span><span class="i">&nbsp;</span><span class="i cj">蛇头</span><span class="i">.Col</span><span class="bx">3</span><span class="o">&lt;</span><span class="n">0</span><span class="i">&nbsp;</span><span class="k">THEN</span></div>
<div class="ln" style="top:427.06px;">3</div>
<div class="bp" style="top:430.26px"></div>
<div class="cl" style="top:429.06px"><span class="i">&nbsp;&nbsp;&nbsp;&nbsp;</span><span class="i">lap</span><span class="i cj">开始</span><span class="tb">TRUE</span><span class="o">:=</span><span class="n">FALSE</span><span class="o">;</span></div>
<div class="ln" style="top:446.09px;">4</div>
<div class="bp" style="top:449.29px"></div>
<div class="cl" style="top:448.09px"><span class="i">&nbsp;&nbsp;&nbsp;&nbsp;</span><span class="i">lap</span><span class="i cj">结束</span><span class="fb">FALSE</span><span class="o">:=</span><span class="n">TRUE</span><span class="o">;</span></div>
<div class="ln" style="top:465.12px;">5</div>
<div class="bp" style="top:468.32px"></div>
<div class="cl" style="top:467.12px"><span class="i">&nbsp;&nbsp;&nbsp;&nbsp;</span><span class="k">RETURN</span><span class="o">;</span></div>
<div class="ln" style="top:484.15px;">6</div>
<div class="cl" style="top:486.15px"><span class="k">END_IF</span><span class="o">;</span></div>
<div class="ln" style="top:503.18px;">7</div>
<div class="bp" style="top:506.38px"></div>
<div class="cl" style="top:505.18px"><span class="i">v_x</span><span class="i cj">吃到食物</span><span class="tb">TRUE</span><span class="o">:=</span><span class="i cj">蛇头</span><span class="i">.Row</span><span class="bx">9</span><span class="o">=</span><span class="i cj">食物</span><span class="i">.Row</span><span class="bx">6</span><span class="i">&nbsp;</span><span class="k">AND</span><span class="i">&nbsp;</span><span class="i cj">蛇头</span><span class="i">.Col</span><span class="bx">3</span><span class="o">=</span><span class="i cj">食物</span><span class="i">.Col</span><span class="bx">3</span></div>
<div class="ln" style="top:522.21px;">8</div>
<div class="cl" style="top:524.21px"><span class="cm">//</span><span class="cm cj">成长</span></div>
<div class="ln" style="top:541.24px;">9</div>
<div class="bp" style="top:544.44px"></div>
<div class="fd" style="top:546.24px"></div>
<div class="cl" style="top:543.24px"><span class="k">IF</span><span class="i">&nbsp;v_x</span><span class="i cj">吃到食物</span><span class="tb">TRUE</span><span class="i">&nbsp;</span><span class="k">THEN</span></div>
<div class="ln" style="top:560.27px;">10</div>
<div class="bp" style="top:563.47px"></div>
<div class="cl" style="top:562.27px"><span class="i">&nbsp;&nbsp;&nbsp;&nbsp;</span><span class="i cj">刷新食物</span><span class="o">();</span></div>
<div class="ln" style="top:579.30px;">11</div>
<div class="bp" style="top:582.50px"></div>
<div class="cl" style="top:581.30px"><span class="i">&nbsp;&nbsp;&nbsp;&nbsp;</span><span class="i cj">尾</span><span class="bx">13</span><span class="o">:=</span><span class="i cj">尾</span><span class="bx">13</span><span class="o">+</span><span class="n">1</span><span class="o">;</span></div>
<div class="ln" style="top:598.33px;">12</div>
<div class="cl" style="top:600.33px"><span class="k">END_IF</span></div>
<div class="ln" style="top:617.36px;">13</div>
<div class="cl" style="top:619.36px"><span class="cm">//</span><span class="cm cj">移动</span></div>
<div class="ln" style="top:636.39px;color:#b8463c">14</div>
<div class="bp" style="top:639.59px"></div>
<div class="fd" style="top:641.39px"></div>
<div class="cl" style="top:638.39px"><span class="k">FOR</span><span class="i">&nbsp;i</span><span class="bx">14</span><span class="o">:=</span><span class="i cj">尾</span><span class="bx">13</span><span class="i">&nbsp;</span><span class="k">TO</span><span class="i">&nbsp;</span><span class="i cj">头</span><span class="bx">0</span><span class="o">+</span><span class="n">1</span><span class="i">&nbsp;</span><span class="k">BY</span><span class="i">&nbsp;</span><span class="o">-</span><span class="n">1</span><span class="i">&nbsp;</span><span class="k">DO</span></div>
<div class="ln" style="top:655.42px;">15</div>
<div class="bp" style="top:658.62px"></div>
<div class="cl" style="top:657.42px"><span class="i">&nbsp;&nbsp;&nbsp;&nbsp;</span><span class="i cj">蛇</span><span class="i">[i</span><span class="bx">14</span><span class="i">]:=</span><span class="i cj">蛇</span><span class="i">[i</span><span class="bx">14</span><span class="o">-</span><span class="n">1</span><span class="i">];</span></div>
<div class="ln" style="top:674.45px;">16</div>
<div class="cl" style="top:676.45px"><span class="k">END_FOR</span></div>
<div class="ln" style="top:693.48px;">17</div>
<div class="cl" style="top:695.48px"><span class="cm">//</span><span class="cm cj">自身碰撞</span></div>
<div class="ln" style="top:712.51px;">18</div>
<div class="bp" style="top:715.71px"></div>
<div class="fd" style="top:717.51px"></div>
<div class="cl" style="top:714.51px"><span class="k">FOR</span><span class="i">&nbsp;i</span><span class="bx">14</span><span class="o">:=</span><span class="i cj">头</span><span class="bx">0</span><span class="i">&nbsp;</span><span class="k">TO</span><span class="i">&nbsp;</span><span class="i cj">尾</span><span class="bx">13</span><span class="i">&nbsp;</span><span class="k">DO</span></div>
<div class="ln" style="top:731.54px;">19</div>
<div class="bp" style="top:734.74px"></div>
<div class="fd" style="top:736.54px"></div>
<div class="cl" style="top:733.54px"><span class="i">&nbsp;&nbsp;&nbsp;&nbsp;</span><span class="k">IF</span><span class="i">&nbsp;</span><span class="i cj">蛇头</span><span class="i">.Row</span><span class="bx">9</span><span class="o">=</span><span class="i cj">蛇</span><span class="i">[i</span><span class="bx">14</span><span class="i">].Row</span><span class="bx">0</span><span class="i">&nbsp;</span><span class="k">AND</span><span class="i">&nbsp;</span><span class="i cj">蛇头</span><span class="i">.Col</span><span class="bx">3</span></div>
<div class="ln" style="top:750.57px;">20</div>
<div class="bp" style="top:753.77px"></div>
<div class="cl" style="top:752.57px"><span class="i">&nbsp;&nbsp;&nbsp;&nbsp;&nbsp;&nbsp;&nbsp;&nbsp;</span><span class="i">lap</span><span class="i cj">开始</span><span class="tb">TRUE</span><span class="o">:=</span><span class="n">FALSE</span><span class="o">;</span></div>
<div class="ln" style="top:769.60px;">21</div>
<div class="bp" style="top:772.80px"></div>
<div class="cl" style="top:771.60px"><span class="i">&nbsp;&nbsp;&nbsp;&nbsp;&nbsp;&nbsp;&nbsp;&nbsp;</span><span class="i">lap</span><span class="i cj">结束</span><span class="fb">FALSE</span><span class="o">:=</span><span class="n">TRUE</span><span class="o">;</span></div>
<div class="ln" style="top:788.63px;">22</div>
<div class="bp" style="top:791.83px"></div>
<div class="cl" style="top:790.63px"><span class="i">&nbsp;&nbsp;&nbsp;&nbsp;&nbsp;&nbsp;&nbsp;&nbsp;</span><span class="k">RETURN</span><span class="o">;</span></div>
<div class="ln" style="top:807.66px;">23</div>
<div class="cl" style="top:809.66px"><span class="i">&nbsp;&nbsp;&nbsp;&nbsp;</span><span class="k">END_IF</span></div>
<div class="ln" style="top:826.69px;">24</div>
<div class="cl" style="top:828.69px"><span class="k">END_FOR</span></div>
<div class="ln" style="top:845.72px;">25</div>
<div class="bp" style="top:848.92px"></div>
<div class="cl" style="top:847.72px"><span class="i cj">蛇</span><span class="i">[</span><span class="n">0</span><span class="i">]:=</span><span class="i cj">蛇头</span><span class="i">;</span></div>
<div class="ln" style="top:864.75px;">26</div>
<div class="bp" style="top:867.95px"></div>
<div class="cl" style="top:866.75px"><span class="i cj">刷新显示画板</span><span class="o">();</span><span class="rb">RETURN</span></div>

<!-- message tabs -->
<div class="a" style="left:0;top:1259px;width:2038px;height:28px;background:#efefef"></div>
<div class="a" style="left:321px;top:1258px;width:1717px;height:1px;background:#a8a8a8"></div>
<div class="a" style="left:0;top:1262px;width:63px;height:24px;border:1px solid #c8c8c8;border-bottom:none;border-left:none;border-radius:0 3px 0 0"></div>
<div class="a" style="left:63px;top:1262px;width:60px;height:24px;border:1px solid #c8c8c8;border-bottom:none;border-radius:3px 3px 0 0"></div>
<div class="a" style="left:134px;top:1262px;width:288px;height:24px;border:1px solid #c8c8c8;border-bottom:none;border-radius:3px 3px 0 0"></div>
<div class="a" style="left:0;top:1285px;width:2038px;height:1px;background:#d4d4d4"></div>
<div class="t" style="left:15px;top:1264px;font-size:15px;line-height:20px;color:#888;letter-spacing:0.6px">监视 1</div>
<div class="t" style="left:87px;top:1264px;font-size:15px;line-height:20px;color:#888">断点</div>
<div class="t" style="left:158px;top:1264px;font-size:15px;line-height:20px;color:#888;letter-spacing:0.45px">消息 -总计0个错误,0个警告,58条消息</div>
<svg class="a" style="left:0;top:1265px" width="8" height="14"><rect x="-4" y="1" width="10" height="10" fill="#fff" stroke="#223" stroke-width="1.4"/><path d="M0 9L5 4" stroke="#4ab" stroke-width="1.2"/></svg>
<svg class="a" style="left:65px;top:1264px" width="13" height="15"><rect x="1" y="1" width="11" height="10" fill="#fff" stroke="#223" stroke-width="1.4"/><circle cx="6.5" cy="9" r="3.5" fill="#fff" stroke="#333"/></svg>
<svg class="a" style="left:137px;top:1265px" width="11" height="12"><rect x="1" y="1" width="9" height="10" fill="#fff" stroke="#223" stroke-width="1.4"/><path d="M3 5H8M3 7H8" stroke="#555"/></svg>

<!-- status bar -->
<div class="a" style="left:0;top:1286px;width:2038px;height:32px;background:#efefef;border-top:1px solid #dcdcdc;border-bottom:1px solid #c8c8c8"></div>
<div class="a" style="left:923px;top:1288px;width:1px;height:28px;background:#d6d6d6"></div>
<div class="a" style="left:1096px;top:1288px;width:1px;height:28px;background:#d6d6d6"></div>
<div class="a" style="left:1406px;top:1288px;width:1px;height:28px;background:#d6d6d6"></div>
<div class="a" style="left:1717px;top:1288px;width:1px;height:28px;background:#d6d6d6"></div>
<div class="a" style="left:1923px;top:1288px;width:1px;height:28px;background:#d6d6d6"></div>
<div class="sb" style="left:968px">设备用户:fzc</div>
<div class="sb" style="left:1140px;top:1294px">最后一次编译:</div>
<svg class="a" style="left:1234px;top:1296px" width="9" height="9"><circle cx="4.5" cy="4.5" r="4" fill="#d02020"/><path d="M2.5 2.5L6.5 6.5M6.5 2.5L2.5 6.5" stroke="#fff" stroke-width="1.1"/></svg>
<div class="sb" style="left:1248px;top:1294px">0</div>
<svg class="a" style="left:1263px;top:1296px" width="9" height="9"><circle cx="4.5" cy="4.5" r="4" fill="#f0d020" stroke="#906000" stroke-width="0.7"/></svg>
<div class="sb" style="left:1278px;top:1294px">0</div>
<div class="sb" style="left:1308px;top:1294px">预编译</div>
<svg class="a" style="left:1355px;top:1296px" width="14" height="12"><path d="M1 6L5 10L13 1" stroke="#2a9a2a" stroke-width="2.2" fill="none"/></svg>
<svg class="a" style="left:1412px;top:1290px" width="11" height="12"><path d="M2 5V2.5A2.5 2.5 0 0 1 7 2.5" stroke="#222" stroke-width="1.3" fill="none"/><rect x="3" y="5" width="7" height="6" fill="#222"/></svg>
<div class="a" style="left:1433px;top:1289px;width:78px;height:27px;background:#8fe88f"></div>
<div class="sb" style="left:1456px">运行</div>
<div class="sb" style="left:1586px">程序下载</div>
<div class="sb" style="left:1792px">程序未改</div>
<div class="sb" style="left:1956px">工程用户:(无)</div>

<!-- taskbar -->
<div class="a" style="left:0;top:1318px;width:2038px;height:61px;background:linear-gradient(90deg,#dcdfee 0%,#dedfee 46%,#e8dde8 47.8%,#f1e2de 49.5%,#f4e5da 52.7%,#f2e3dc 56%,#e8dee8 57.9%,#dcdfee 60%,#dcdfee 100%)"></div>
<svg class="a" style="left:15px;top:1333px" width="32" height="31"><defs><linearGradient id="wg" x1="0" y1="0" x2="1" y2="1"><stop offset="0" stop-color="#2cb6f4"/><stop offset="1" stop-color="#0a6fd0"/></linearGradient></defs><rect x="0" y="0" width="15" height="14.5" fill="url(#wg)"/><rect x="16.5" y="0" width="15" height="14.5" fill="url(#wg)"/><rect x="0" y="16" width="15" height="15" fill="url(#wg)"/><rect x="16.5" y="16" width="15" height="15" fill="url(#wg)"/></svg>
<div class="a" style="left:65px;top:1328px;width:281px;height:40px;border-radius:20px;background:#f4f4f9;border:1px solid #d6d8e4"></div>
<svg class="a" style="left:78px;top:1337px" width="22" height="22"><circle cx="9" cy="9" r="7" fill="none" stroke="#222" stroke-width="2.2"/><path d="M14 14L20 20" stroke="#222" stroke-width="2.4"/></svg>
<div class="t" style="left:111px;top:1336px;font-size:19px;line-height:24px;color:#555">搜索</div>
<svg class="a" style="left:282px;top:1332px" width="60" height="34"><path d="M10 30V14H16V10H24A6 6 0 0 1 36 10H44V14H50V30Z" fill="#e8b0d0"/><rect x="14" y="16" width="32" height="14" fill="#e0a0a8"/><circle cx="30" cy="9" r="5" fill="#40b8c8"/><rect x="12" y="10" width="4" height="8" fill="#60a0d0"/><rect x="44" y="10" width="4" height="8" fill="#60a0d0"/><circle cx="5" cy="26" r="5" fill="#60a040"/><circle cx="55" cy="26" r="5" fill="#60a040"/><path d="M0 31H60" stroke="#70a050" stroke-width="3"/></svg>
<svg class="a" style="left:362px;top:1335px" width="32" height="28"><rect x="11" y="1" width="19" height="19" rx="2" fill="#e8e8e8" stroke="#f8f8f8"/><rect x="1" y="9" width="20" height="18" rx="2" fill="#1e1e1e"/><rect x="7" y="9" width="14" height="11" fill="#cfcfcf"/></svg>
<svg class="a" style="left:419px;top:1332px" width="33" height="33"><defs><linearGradient id="eg" x1="0" y1="1" x2="1" y2="0"><stop offset="0" stop-color="#0c59b8"/><stop offset="0.55" stop-color="#1c9de6"/><stop offset="1" stop-color="#5ad66a"/></linearGradient></defs><circle cx="16.5" cy="16.5" r="15.5" fill="url(#eg)"/><path d="M9 19Q9 12 16 11Q23 11 24 17Q24 20 20 20H14Q15 25 21 26Q25 27 29 24Q26 31 17 31Q8 30 9 19Z" fill="#e0e2ee"/><path d="M9 19Q10 27 19 29Q12 31 6 25Q3 19 6 13Q9 9 14 9Q9 13 9 19Z" fill="#0a4a9a" opacity="0.6"/></svg>
<svg class="a" style="left:476px;top:1333px" width="33" height="30"><path d="M1 3Q1 1 3 1H11L14 4H30Q32 4 32 6V9H1Z" fill="#e8a818"/><path d="M1 8H32V28Q32 29 31 29H2Q1 29 1 28Z" fill="#ffd23a"/><path d="M7 29V21Q7 19 9 19H24Q26 19 26 21V29Z" fill="#1a72d8"/><path d="M10 23H23" stroke="#0a4aa8" stroke-width="1.5"/></svg>
<svg class="a" style="left:533px;top:1332px" width="33" height="33"><rect x="1" y="1" width="31" height="31" rx="4" fill="#3e5a9a" stroke="#1a2858" stroke-width="1.5"/><rect x="5" y="5" width="23" height="19" fill="none" stroke="#c8d4ec" stroke-width="1.5"/><rect x="7" y="7" width="19" height="15" fill="#4a68a8"/><path d="M15 14V24L18 22L21 27L24 25L21 21H25Z" fill="#f4f4f4" stroke="#333" stroke-width="0.8"/></svg>
<svg class="a" style="left:590px;top:1331px" width="33" height="33"><path d="M16.5 2L31 9.5V24L16.5 31.5L2 24V9.5Z" fill="#b8b8b8"/><path d="M16.5 2L31 9.5L16.5 17L2 9.5Z" fill="#d8d8d8"/><path d="M16.5 2L23.75 5.75L16.5 9.5L9.25 5.75Z" fill="#c4c4c4"/><path d="M9 13.5L16.5 10L24 13.5V23L16.5 27L9 23Z" fill="#e81818"/><path d="M16.5 17.5V27L9 23V13.5Z" fill="#c00010"/></svg>
<div class="a" style="left:638px;top:1324px;width:49px;height:46px;border-radius:5px;background:#eceef6"></div>
<svg class="a" style="left:647px;top:1335px" width="31" height="26"><rect x="1" y="1" width="29" height="24" fill="#f0f0f0" stroke="#888"/><rect x="3" y="5" width="15" height="18" fill="#2a8a6a"/><path d="M3 23L18 5V23Z" fill="#60a880"/><path d="M21 7H28M21 11H28M21 15H28" stroke="#aaa"/><rect x="26" y="5" width="2" height="16" fill="#3aa070"/></svg>
<div class="a" style="left:707px;top:1331px;width:24px;height:24px;border-radius:3px;background:#eceef4"></div><svg class="a" style="left:703px;top:1331px" width="36" height="36"><path d="M7 8V5H10M13 5H16M7 11V14" stroke="#d04020" stroke-width="3" fill="none"/><path d="M12 12L26 26M20 12L14 24" stroke="#888" stroke-width="1.8"/><circle cx="29" cy="15" r="3.2" fill="none" stroke="#2a90e0" stroke-width="2"/><circle cx="17" cy="30" r="3.2" fill="none" stroke="#2a90e0" stroke-width="2"/></svg>
<div class="a" style="left:546px;top:1370px;width:8px;height:4px;border-radius:2px;background:#7a7a88"></div>
<div class="a" style="left:603px;top:1370px;width:8px;height:4px;border-radius:2px;background:#7a7a88"></div>
<div class="a" style="left:653px;top:1370px;width:20px;height:4px;border-radius:2px;background:#555562"></div>
<div class="a" style="left:716px;top:1370px;width:8px;height:4px;border-radius:2px;background:#7a7a88"></div>
<svg class="a" style="left:1817px;top:1341px" width="16" height="10"><path d="M1 9L8 2L15 9" stroke="#222" stroke-width="1.6" fill="none"/></svg>
<div class="t" style="left:1857px;top:1335px;font-size:20px;line-height:26px;color:#aaa">中</div>
<div class="a" style="left:1906px;top:1337px;width:21px;height:22px;border-radius:4px;background:#2a8aff"></div>
<svg class="a" style="left:1908px;top:1339px" width="18" height="18"><circle cx="8.5" cy="8.5" r="5" fill="none" stroke="#fff" stroke-width="2"/><path d="M11 11L15 15" stroke="#fff" stroke-width="2"/></svg>
<svg class="a" style="left:1952px;top:1337px" width="24" height="22"><rect x="1" y="3" width="17" height="13" fill="none" stroke="#222" stroke-width="1.6"/><path d="M6 20H14M10 16V20" stroke="#222" stroke-width="1.6"/><rect x="16" y="1" width="6" height="10" fill="#eee" stroke="#222" stroke-width="1.4"/></svg>
<svg class="a" style="left:1984px;top:1339px" width="22" height="18"><path d="M2 6H6L11 2V16L6 12H2Z" fill="none" stroke="#222" stroke-width="1.5"/><path d="M14 5Q17 9 14 13M17 3Q21 9 17 15" stroke="#222" fill="none" stroke-width="1.4"/></svg>
<svg class="a" style="left:2014px;top:1337px" width="24" height="22"><rect x="2" y="5" width="20" height="12" rx="2" fill="none" stroke="#222" stroke-width="1.6"/><rect x="4" y="7" width="12" height="8" fill="#222"/><path d="M7 1L10 5" stroke="#222" stroke-width="1.5"/></svg>

<!-- vis window -->
<div class="a" style="left:887px;top:509px;width:885px;height:693px;border-radius:8px;box-shadow:0 24px 50px rgba(0,0,0,0.31),0 0 22px rgba(0,0,0,0.15);background:#a4a4a4"></div><div class="a" style="left:888px;top:510px;width:883px;height:33px;border-radius:7px 7px 0 0;background:#eef3f3"></div>
<div class="a" style="left:1615px;top:524px;width:13px;height:1.3px;background:#222"></div>
<div class="a" style="left:1674px;top:518px;width:13px;height:13px;border:1px solid #b8bcbc;border-radius:2px"></div>
<svg class="a" style="left:1734px;top:517px" width="16" height="16"><path d="M1.5 1.5L14.5 14.5M14.5 1.5L1.5 14.5" stroke="#222" stroke-width="1.3"/></svg>
<div class="a" style="left:889.5px;top:542px;width:882.5px;height:660px;background:#242424;border-radius:0 0 8px 8px"></div>
<div class="a" style="left:892px;top:544px;width:877.3px;height:655.4px;background:#fefee3;border-radius:0 0 6px 0"></div>
<div class="a" style="left:900px;top:553.3px;width:633.6px;height:633.6px;background-color:#c0c0c0"></div>
<div class="a" style="left:1018.8px;top:790.9px;width:39.6px;height:316.8px;background:#33cc33"></div>
<div class="a" style="left:1018.8px;top:1068.1px;width:277.2px;height:39.6px;background:#33cc33"></div>
<div class="a" style="left:1296px;top:909.7px;width:39.6px;height:39.6px;background:#33cc33"></div>
<div class="a" style="left:939.0px;top:553.3px;width:1.2px;height:633.6px;background:#f0f0dc"></div><div class="a" style="left:978.6px;top:553.3px;width:1.2px;height:633.6px;background:#f0f0dc"></div><div class="a" style="left:1018.2px;top:553.3px;width:1.2px;height:633.6px;background:#f0f0dc"></div><div class="a" style="left:1057.8px;top:553.3px;width:1.2px;height:633.6px;background:#f0f0dc"></div><div class="a" style="left:1097.4px;top:553.3px;width:1.2px;height:633.6px;background:#f0f0dc"></div><div class="a" style="left:1137.0px;top:553.3px;width:1.2px;height:633.6px;background:#f0f0dc"></div><div class="a" style="left:1176.6px;top:553.3px;width:1.2px;height:633.6px;background:#f0f0dc"></div><div class="a" style="left:1216.2px;top:553.3px;width:1.2px;height:633.6px;background:#f0f0dc"></div><div class="a" style="left:1255.8px;top:553.3px;width:1.2px;height:633.6px;background:#f0f0dc"></div><div class="a" style="left:1295.4px;top:553.3px;width:1.2px;height:633.6px;background:#f0f0dc"></div><div class="a" style="left:1335.0px;top:553.3px;width:1.2px;height:633.6px;background:#f0f0dc"></div><div class="a" style="left:1374.6px;top:553.3px;width:1.2px;height:633.6px;background:#f0f0dc"></div><div class="a" style="left:1414.2px;top:553.3px;width:1.2px;height:633.6px;background:#f0f0dc"></div><div class="a" style="left:1453.8px;top:553.3px;width:1.2px;height:633.6px;background:#f0f0dc"></div><div class="a" style="left:1493.4px;top:553.3px;width:1.2px;height:633.6px;background:#f0f0dc"></div><div class="a" style="left:900px;top:592.3px;width:633.6px;height:1.2px;background:#f0f0dc"></div><div class="a" style="left:900px;top:631.9px;width:633.6px;height:1.2px;background:#f0f0dc"></div><div class="a" style="left:900px;top:671.5px;width:633.6px;height:1.2px;background:#f0f0dc"></div><div class="a" style="left:900px;top:711.1px;width:633.6px;height:1.2px;background:#f0f0dc"></div><div class="a" style="left:900px;top:750.7px;width:633.6px;height:1.2px;background:#f0f0dc"></div><div class="a" style="left:900px;top:790.3px;width:633.6px;height:1.2px;background:#f0f0dc"></div><div class="a" style="left:900px;top:829.9px;width:633.6px;height:1.2px;background:#f0f0dc"></div><div class="a" style="left:900px;top:869.5px;width:633.6px;height:1.2px;background:#f0f0dc"></div><div class="a" style="left:900px;top:909.1px;width:633.6px;height:1.2px;background:#f0f0dc"></div><div class="a" style="left:900px;top:948.7px;width:633.6px;height:1.2px;background:#f0f0dc"></div><div class="a" style="left:900px;top:988.3px;width:633.6px;height:1.2px;background:#f0f0dc"></div><div class="a" style="left:900px;top:1027.9px;width:633.6px;height:1.2px;background:#f0f0dc"></div><div class="a" style="left:900px;top:1067.5px;width:633.6px;height:1.2px;background:#f0f0dc"></div><div class="a" style="left:900px;top:1107.1px;width:633.6px;height:1.2px;background:#f0f0dc"></div><div class="a" style="left:900px;top:1146.7px;width:633.6px;height:1.2px;background:#f0f0dc"></div>
<!-- buttons -->
<div class="a btn" style="left:1601px;top:658px;width:109px;height:41px;border-radius:9px">重开</div>
<div class="a btn" style="left:1601px;top:716px;width:109px;height:41px;border-radius:9px">暂停</div>
<div class="a btn" style="left:1625px;top:807px;width:60px;height:60px">上</div>
<div class="a btn" style="left:1549px;top:848px;width:61px;height:60px">左</div>
<div class="a btn" style="left:1702px;top:848px;width:60px;height:60px">右</div>
<div class="a btn" style="left:1625px;top:888px;width:60px;height:60px">下</div>
<div class="t" style="left:1568px;top:996px;font-size:18px;color:#222">开始</div>
<div class="t" style="left:1636px;top:996px;font-size:18px;color:#222">暂停</div>
<div class="t" style="left:1704px;top:996px;font-size:18px;color:#222">结束</div>
<div class="a lring" style="left:1566px;top:1030px"><div class="lamp" style="background:radial-gradient(circle at 50% 60%,#18d888 0%,#10c070 50%,#075a34 100%)"><i class="hl"></i></div></div>
<div class="a lring" style="left:1634px;top:1030px"><div class="lamp" style="background:radial-gradient(circle at 50% 62%,#8a7a10 0%,#3e3606 55%,#141204 100%)"><i class="hl"></i></div></div>
<div class="a lring" style="left:1702px;top:1030px"><div class="lamp" style="background:radial-gradient(circle at 50% 62%,#8a1022 0%,#4a0814 55%,#16040a 100%)"><i class="hl"></i></div></div>
<svg class="a" style="left:1728px;top:867px" width="20" height="28"><path d="M1.5 1.5V21L6 16.5L9.5 24.5L13 23L9.5 15.5H16Z" fill="#fff" stroke="#111" stroke-width="1.3" stroke-linejoin="round"/></svg>

</body></html>
